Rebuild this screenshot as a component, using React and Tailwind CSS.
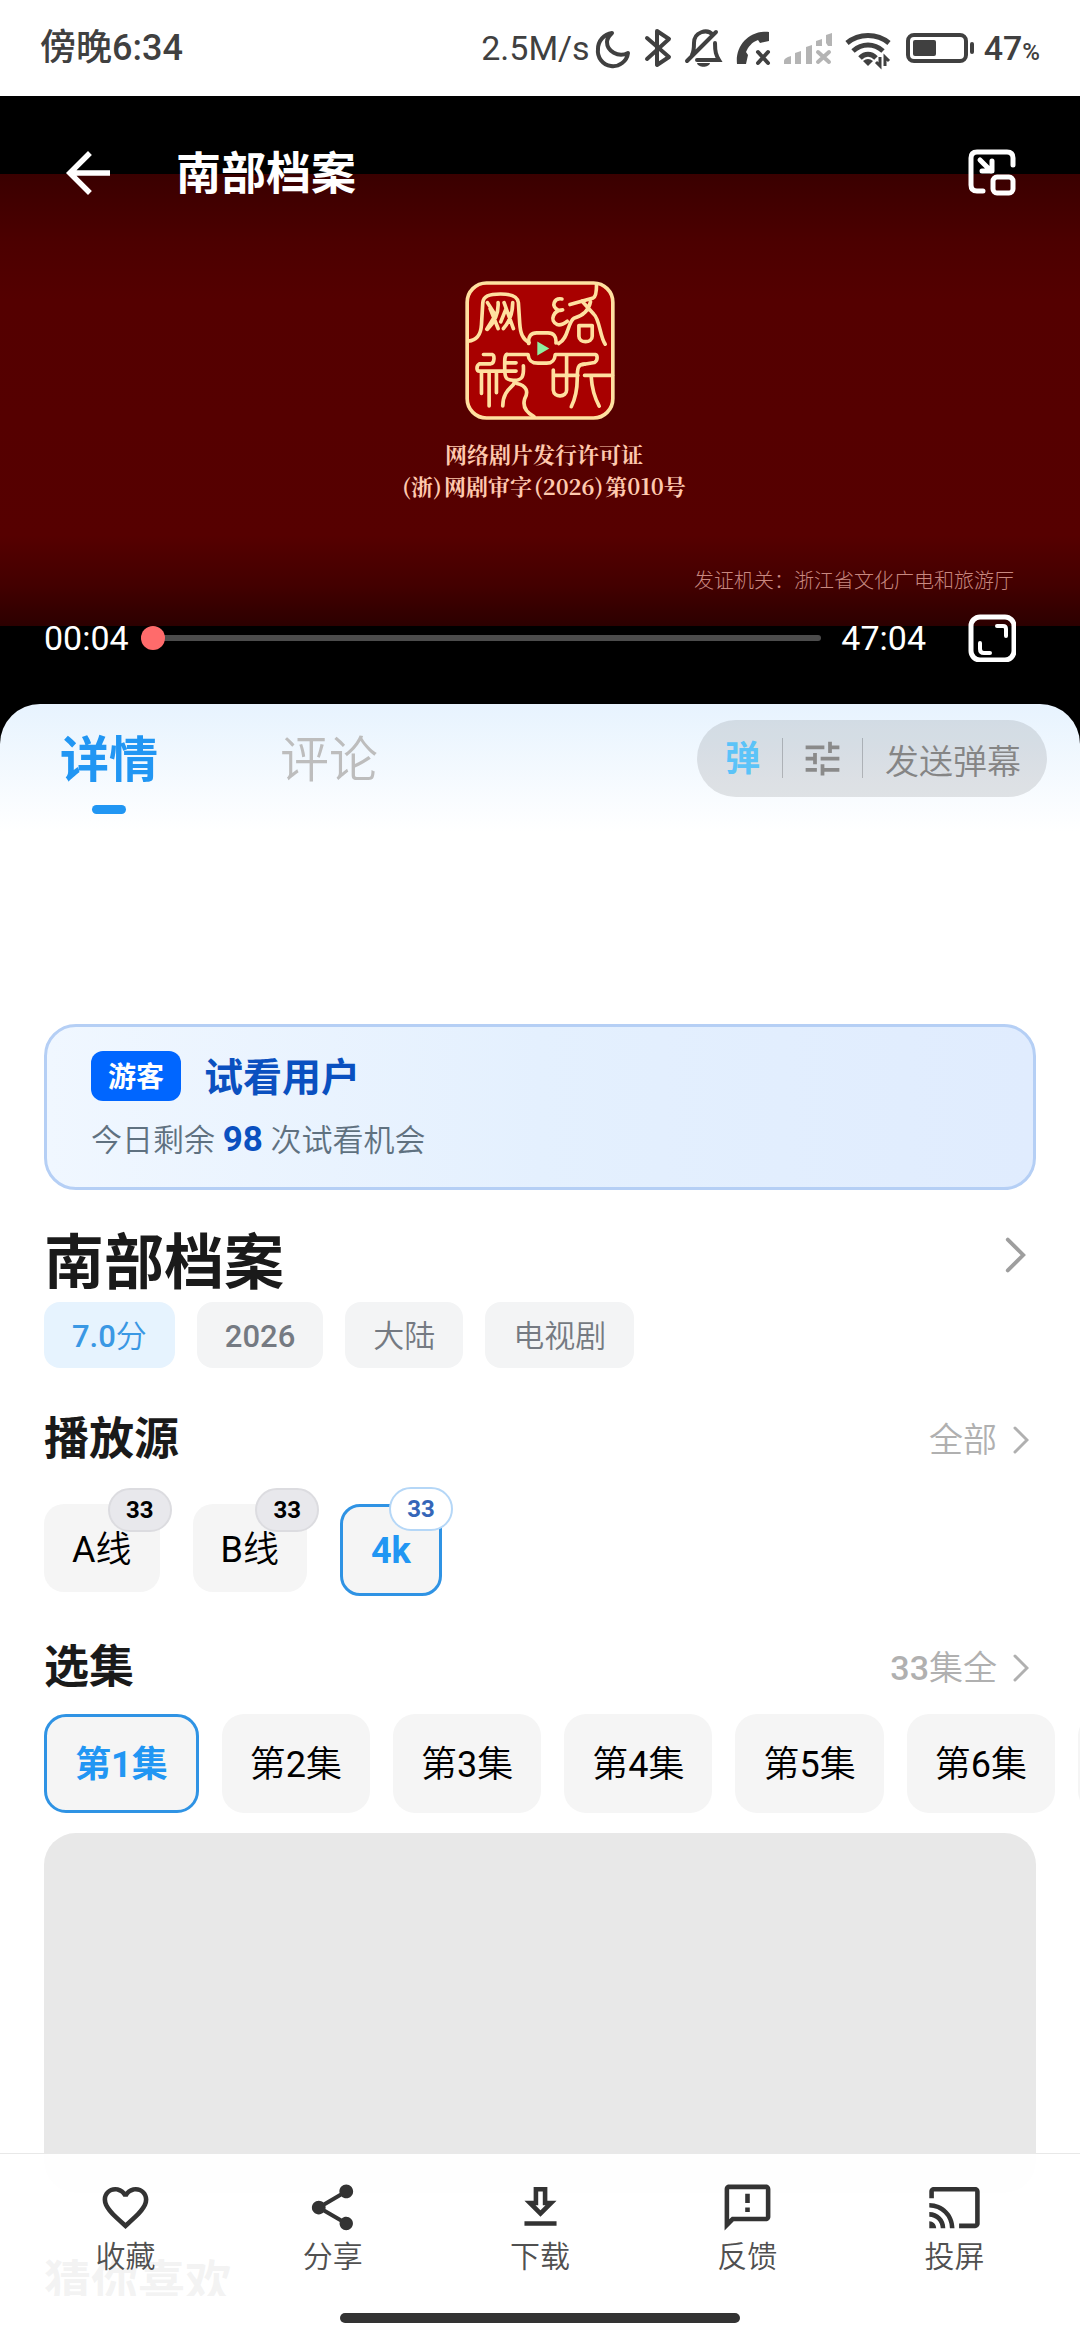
import React, { useState } from "react";
import {
  MdArrowBack,
  MdCast,
  MdFavoriteBorder,
  MdOutlineDownload,
  MdOutlineFeedback,
  MdShare,
  MdTune,
} from "react-icons/md";

const tags = ["2026", "大陆", "电视剧"];

const sources = [
  { name: "A线", count: 33 },
  { name: "B线", count: 33 },
  { name: "4k", count: 33 },
];

const episodes = [1, 2, 3, 4, 5, 6, 7];

const actions = [
  { label: "收藏", icon: MdFavoriteBorder },
  { label: "分享", icon: MdShare },
  { label: "下载", icon: MdOutlineDownload },
  { label: "反馈", icon: MdOutlineFeedback },
  { label: "投屏", icon: MdCast },
];

// Body text uses the lighter Chinese face, headings the bold one
const bodyFont = "font-['Roboto','Noto_Sans_CJK_SC_DemiLight','Noto_Sans_CJK_SC',sans-serif]";
const headFont = "font-['Roboto','Noto_Sans_CJK_SC',sans-serif]";

const Chevron = ({ className }) => (
  <svg viewBox="0 0 16 28" className={className} fill="none" stroke="currentColor" strokeWidth="3" strokeLinecap="round">
    <path d="M2 2l12 12L2 26" />
  </svg>
);

const StatusIcons = () => (
  <svg viewBox="590 24 390 48" className="w-[390px] h-[48px]" fill="none" stroke="#404040" strokeWidth="4">
    {/* Moon */}
    <path d="M612 33c-8 1-14 8-14 16a15 15 0 0 0 30 4c-10 5-21-2-21-11 0-4 2-6 5-9z" strokeLinejoin="round" />
    {/* Bluetooth */}
    <path d="M647 38l22 19-12 8V31l12 8-22 20" strokeLinejoin="round" strokeLinecap="round" />
    {/* Muted bell */}
    <path d="M692 55c2-4 2-8 2-12 0-11 13-15 19-8M715 43c0 9 1 12 4 17h-22M716 32l-29 29" strokeLinecap="round" />
    <path d="M697 63h13c-1 5-12 5-13 0z" fill="#404040" stroke="none" />
    {/* Call */}
    <path d="M769 32v9l-9 2-2-3c-6 2-10 7-12 12l2 3-2 9h-9c-2-18 12-34 32-32z" fill="#404040" stroke="none" />
    <path d="M758 52l10 11M768 52l-10 11" strokeLinecap="round" />
    {/* Signal */}
    <g fill="#b4b4b4" stroke="none">
      <path d="M784 61q0-3 7-5v8h-7zM795 53l6-2v13h-6zM806 47l6-2v19h-6zM816 41l6-2v7h-6zM826 35l6-2v13h-4l-2-3z" />
    </g>
    <path d="M818 52l11 10M829 52l-11 10" stroke="#b4b4b4" strokeLinecap="round" />
    {/* Wi-Fi */}
    <path d="M847 43c12-10 30-10 42 0M853 51c9-8 21-8 30 0M860 58c5-5 11-5 16 0" strokeWidth="5" />
    <path d="M863 61q5-4 10 0l-5 5z" fill="#404040" stroke="none" />
    <path d="M880 57v9l-4-4M885 66v-9l4 4" strokeWidth="3" />
    {/* Battery */}
    <rect x="908" y="35" width="58" height="26" rx="6" />
    <rect x="913" y="40" width="23" height="16" rx="2" fill="#404040" stroke="none" />
    <path d="M972 44v8" strokeLinecap="round" />
  </svg>
);

const PipIcon = () => (
  <svg viewBox="0 0 48 48" className="size-12" fill="none" stroke="currentColor" strokeWidth="5" strokeLinecap="round" strokeLinejoin="round">
    <path d="M45 16V9q0-6-6-6H9Q3 3 3 9v27q0 6 6 6h6" />
    <rect x="25" y="28" width="20" height="16" rx="4" />
    <path d="M12 11l11 11M24 12v10H14" />
  </svg>
);

const FullscreenIcon = () => (
  <svg viewBox="0 0 48 48" className="size-12" fill="none" stroke="currentColor" strokeWidth="5" strokeLinecap="round" strokeLinejoin="round">
    <rect x="3" y="3" width="43" height="43" rx="9" />
    <path d="M29 12h6q3 0 3 3v7M12 29v6q0 4 4 4h6" strokeWidth="4" />
  </svg>
);

const Seal = () => (
  <svg viewBox="255 62 450 418" className="w-[150px] h-[139px]" fill="none">
    <rect x="260" y="67" width="440" height="408" rx="58" fill="#a80000" />
    <g stroke="#ffe0a0" strokeWidth="11" strokeLinecap="round" strokeLinejoin="round">
      <rect x="261" y="68" width="438" height="406" rx="58" />
      <path d="M264 243c26-3 38-18 40-50l4-66c2-20 18-26 53-26s52 8 54 26l4 62c2 30 8 48 28 58" />
      <path d="M322 127l24 38-26 42M354 127c2 34-14 62-32 80M330 145l24 60M372 127l28 78M398 127c0 34-12 60-28 78M378 145l-16 40" />
      <path d="M546 116c-24-4-34 22-12 33 8 3 14 0 14 0-26 0-42 32-16 44 10 3 22-4 30-10M570 133l70-20c8-4 10-16 10-40M606 122l36 40c18 16 18 68 34 90M632 124c-6 30-28 44-50 50-20 14-16 62-46 76M597 196v32c0 22 40 22 40 0v-32h-40" />
      <path d="M446 250c-2-24 8-32 24-32h34c16 0 26 10 24 30M380 283h64c2 20 12 26 30 26h26c18 0 24-8 26-26h120c8 2 8 18-2 24l-36 6" />
      <path d="M310 283h26c8 2 8 26-4 28h-34c-10 6-10 22 0 22h110M304 336v64M327 336v102M349 336v62M380 283c-8 4-6 24-6 46 0 32 10 30 30 32 22-2 28-10 26-44M374 308h34M402 362c8 18-34 20-34 76M410 370c30 6 36 26 24 46-8 26 10 44 28 54" />
      <path d="M520 330v60c2 24 40 22 40 0v-62M520 346h74M560 286v60M614 312c-20 0-22 10-22 44 0 40-8 64-18 84M614 346h84M634 350c2 36 12 66 24 88" />
    </g>
    <path d="M472 244l36 21-36 21z" fill="#8df0a0" />
  </svg>
);

const SectionHeader = ({ title, more }) => (
  <div className="flex items-center justify-between pr-[7px]">
    <h2 className={`text-[45px] leading-[60px] font-bold text-[#1a1a1a] ${headFont}`}>{title}</h2>
    <button className="flex items-center gap-4 text-[34px] leading-[48px] font-medium text-[#b0b0b0]">
      {more}
      <Chevron className="w-[16px] h-[28px]" />
    </button>
  </div>
);

const App = () => {
  const [tab, setTab] = useState("详情");
  const [position, setPosition] = useState(0);
  const [source, setSource] = useState("4k");
  const [episode, setEpisode] = useState(1);

  return (
    <div className={`h-screen flex flex-col bg-white overflow-hidden ${bodyFont}`}>

      {/* Status Bar */}
      <header className={`h-24 shrink-0 flex items-center justify-between px-10 text-[34px] text-[#404040] font-medium ${headFont}`}>
        <span className="text-[36px]">傍晚6:34</span>
        <div className="flex items-center">
          <span className="font-normal">2.5M/s</span>
          <StatusIcons />
          <span className="ml-1">47<span className="text-2xl">%</span></span>
        </div>
      </header>

      {/* Player */}
      <section className="relative aspect-video shrink-0 flex flex-col justify-center bg-black text-white">
        <div className="aspect-[43/18] flex flex-col items-center pt-[107px] bg-[linear-gradient(to_bottom,#3a0000_0%,#4c0000_15%,#540000_28%,#560000_80%,#430000_91%,#2c0000_100%)]">
          <Seal />
          <div className="mt-[18px] flex flex-col items-center pl-2 text-[22px] leading-8 font-bold text-[#ffc9ae] font-['Noto_Serif_CJK_SC','Liberation_Serif','Noto_Sans_CJK_SC',serif]">
            <p>网络剧片发行许可证</p>
            <p className="flex gap-[2px]">
              <span>(浙)</span>
              <span>网剧审字</span>
              <span>(2026)</span>
              <span>第010号</span>
            </p>
          </div>
          <p className={`mt-16 mr-[66px] self-end text-xl leading-[30px] font-light text-[#c88880] ${headFont}`}>
            发证机关：浙江省文化广电和旅游厅
          </p>
        </div>

        <div className="absolute inset-x-0 top-11 flex items-center pl-[55px] pr-16">
          <button aria-label="返回">
            <MdArrowBack className="size-[66px]" />
          </button>
          <h1 className={`ml-[55px] flex-1 pt-1 text-[45px] leading-[60px] font-bold ${headFont}`}>南部档案</h1>
          <button aria-label="画中画">
            <PipIcon />
          </button>
        </div>

        <div className="absolute inset-x-0 bottom-[42px] flex items-center pl-11 pr-16 text-[34px] leading-[48px]">
          <span>00:04</span>
          <input
            type="range"
            aria-label="播放进度"
            min="0"
            max="2824"
            value={position}
            onChange={(e) => setPosition(e.target.value)}
            className="mx-3 flex-1 h-[6px] appearance-none rounded-full bg-[#4c4c4c] [&::-webkit-slider-thumb]:appearance-none [&::-webkit-slider-thumb]:size-6 [&::-webkit-slider-thumb]:rounded-full [&::-webkit-slider-thumb]:bg-[#ff6b6b]"
          />
          <span className="ml-2">47:04</span>
          <button aria-label="全屏" className="ml-[42px]">
            <FullscreenIcon />
          </button>
        </div>
      </section>

      <main className="relative flex-1 overflow-hidden">
        {/* Tabs */}
        <div className="bg-black">
          <div className="h-32 flex items-start justify-between rounded-t-[40px] pt-4 pl-[60px] pr-[33px] bg-linear-to-b from-[#e7f3fe] to-white">
            <div className="flex gap-[122px] pt-[10px]">
              {["详情", "评论"].map((name) => (
                <button
                  key={name}
                  onClick={() => setTab(name)}
                  className={`flex flex-col items-center text-[49px] leading-[62px] ${
                    tab === name
                      ? "font-bold text-[#2196f3] font-['Roboto','Noto_Sans_CJK_SC',sans-serif]"
                      : "text-[#bdbdbd]"
                  }`}
                >
                  {name}
                  {tab === name && <span className="mt-[13px] h-[9px] w-[34px] rounded-full bg-[#2196f3]" />}
                </button>
              ))}
            </div>
            <div className="h-[77px] flex items-center rounded-full bg-black/10 pl-7 pr-[26px] text-[34px]">
              <button className={`pt-1 text-[35px] font-bold text-[#5bc3f8] ${headFont}`}>弹</button>
              <span className="ml-[22px] h-10 w-px bg-black/20" />
              <button aria-label="弹幕设置" className="mx-[17px]">
                <MdTune className="size-[45px] text-[#8a8a8a]" />
              </button>
              <span className="mr-[22px] h-10 w-px bg-black/20" />
              <button className="pt-2 text-[#858585]">发送弹幕</button>
            </div>
          </div>
        </div>

        <div className="px-11 pt-48">
          {/* Guest Card */}
          <div className="rounded-[32px] border-[3px] border-[#b5cff5] bg-linear-to-r from-[#f0f7ff] via-[#e4f0fe] to-[#e0ecfe] px-11 pt-6 pb-[22px]">
            <div className={`flex items-center gap-[23px] font-bold ${headFont}`}>
              <span className="rounded-xl bg-[#0066ff] px-[17px] pt-1 text-[28px] leading-[46px] text-white">游客</span>
              <span className="pt-1 text-[39px] leading-[46px] text-[#0a50c0]">试看用户</span>
            </div>
            <p className="mt-[14px] text-[31px] leading-[49px] text-[#5f7180]">
              今日剩余 <b className="text-[35px] text-[#0a50c0]">98</b> 次试看机会
            </p>
          </div>

          {/* Title */}
          <div className="mt-8 flex items-start justify-between pr-[10px]">
            <h1 className={`pt-1 text-[60px] leading-[76px] font-bold text-[#1a1a1a] ${headFont}`}>南部档案</h1>
            <button aria-label="详情" className="h-[66px]">
              <Chevron className="w-[21px] h-[36px] text-[#9e9e9e]" />
            </button>
          </div>
          <div className="flex gap-[22px] text-[31px] leading-[62px] font-medium">
            <span className="rounded-2xl bg-[#e6f3fe] px-7 pt-1 text-[#3a98e4]">7.0分</span>
            {tags.map((tag) => (
              <span key={tag} className="rounded-2xl bg-[#f3f4f5] px-7 pt-1 text-[#757a82]">{tag}</span>
            ))}
          </div>

          {/* Sources */}
          <div className="mt-[42px]">
            <SectionHeader title="播放源" more="全部" />
            <div className="mt-[34px] flex items-start gap-[33px] text-[36px] leading-[44px]">
              {sources.map(({ name, count }) => {
                const active = source === name;
                return (
                  <button
                    key={name}
                    onClick={() => setSource(name)}
                    className={`relative rounded-[20px] bg-[#f5f5f5] px-7 pb-5 ${
                      active ? "border-[3px] border-[#2f93e4] pt-[22px] font-bold text-[#2196f3]" : "pt-6 text-black"
                    }`}
                  >
                    {name}
                    <span
                      className={`absolute rounded-full border-2 px-4 text-2xl leading-10 font-bold ${
                        active
                          ? "-top-5 -right-[14px] border-[#b5d7f7] bg-white text-[#3566b8]"
                          : "-top-4 -right-3 border-[#dcdce0] bg-[#e8e8ec] text-black"
                      }`}
                    >
                      {count}
                    </span>
                  </button>
                );
              })}
            </div>
          </div>

          {/* Episodes */}
          <div className="mt-[42px]">
            <SectionHeader title="选集" more="33集全" />
            <div className="-mr-11 mt-4 flex gap-[23px] overflow-hidden text-[36px]">
              {episodes.map((n) => (
                <button
                  key={n}
                  onClick={() => setEpisode(n)}
                  className={`h-[99px] shrink-0 rounded-[22px] bg-[#f5f5f5] px-7 pt-1 ${
                    episode === n
                      ? "border-[3px] border-[#2f93e4] font-bold text-[#2196f3] font-['Roboto','Noto_Sans_CJK_SC',sans-serif]"
                      : "text-black"
                  }`}
                >
                  第{n}集
                </button>
              ))}
            </div>
          </div>

          <div className="mt-5 h-[360px] rounded-[32px] bg-[#e8e8e8]" />
          <h2 className={`mt-[60px] text-[47px] leading-[60px] font-bold text-[#1a1a1a] ${headFont}`}>猜你喜欢</h2>
        </div>

        {/* Bottom Actions */}
        <nav className="absolute inset-x-0 bottom-0 h-[143px] flex border-t border-[#e8e8e8] bg-white/95 px-[22px] pt-[26px]">
          {actions.map(({ label, icon: Icon }) => (
            <button key={label} className="flex-1 flex flex-col items-center text-[30px] leading-[44px] text-[#505050]">
              <Icon className="size-[55px] text-[#333333]" />
              {label}
            </button>
          ))}
        </nav>
      </main>

      <footer className="h-11 shrink-0 flex justify-center pt-[17px] bg-white">
        <span className="h-[10px] w-[400px] rounded-full bg-[#333333]" />
      </footer>
    </div>
  );
};

export default App;
